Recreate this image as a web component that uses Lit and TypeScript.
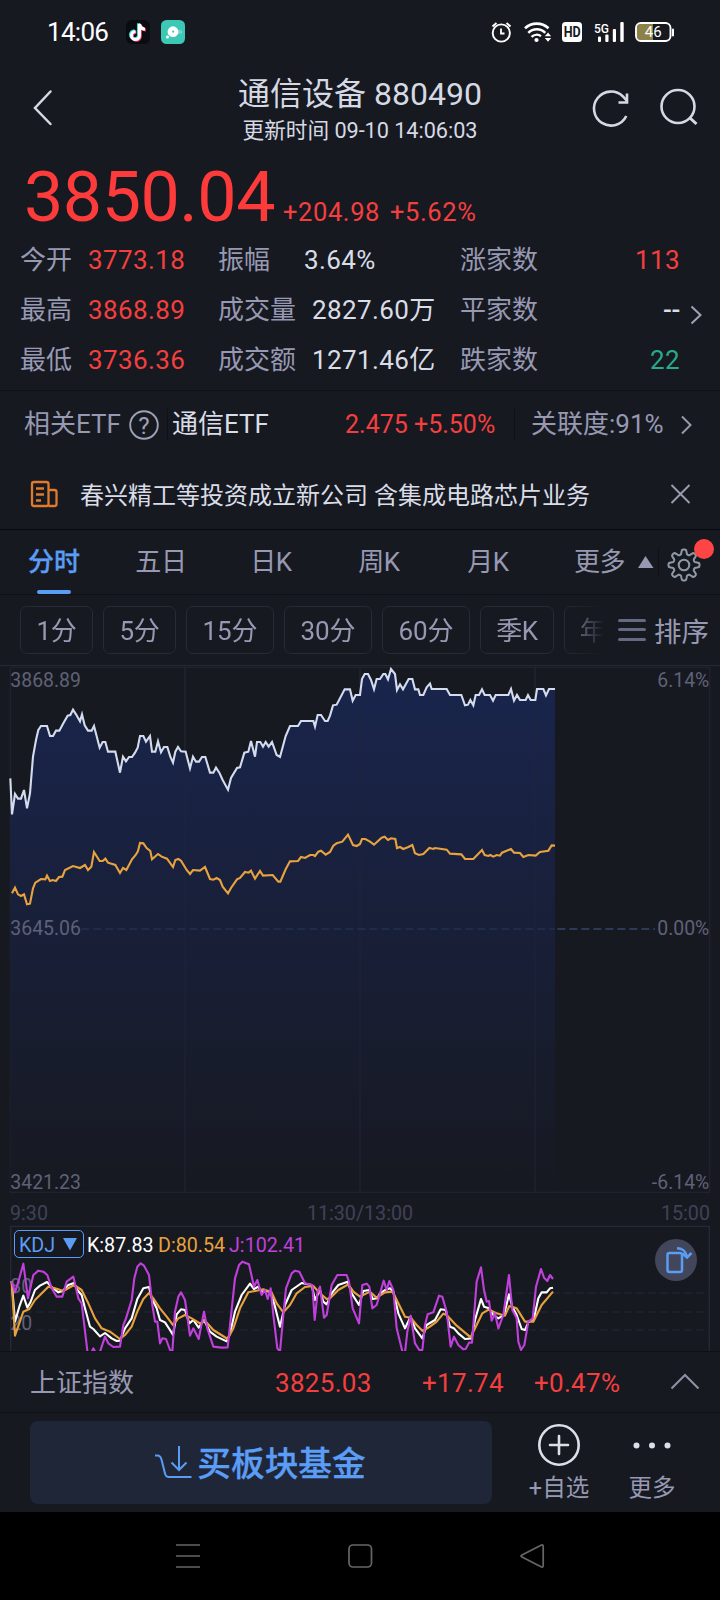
import { LitElement, html, css } from "lit";
import { customElement } from "lit/decorators.js";

// Chart series. Units are thirds of a pixel, as "x,y" pairs.
const PRICE =
  "31,355 36,463 45,402 54,416 63,416 72,390 81,445 90,400 99,290 108,240 115,210 123,198 141,198 150,228 159,228 168,212 178,212 190,190 203,167 211,165 219,149 228,163 240,184 246,163 254,196 264,212 275,212 282,198 299,263 308,246 316,246 324,275 346,275 360,338 369,290 378,304 387,291 396,291 405,278 413,263 420,228 430,228 438,245 450,228 456,275 466,275 474,244 483,277 492,261 502,261 511,290 519,308 526,275 534,261 543,274 557,275 570,325 579,290 588,305 597,305 606,291 616,291 630,338 640,338 648,323 658,338 668,360 684,389 693,354 711,324 720,322 733,278 745,275 753,243 765,290 771,246 781,246 789,260 797,246 806,260 816,246 830,285 840,291 857,228 870,198 894,198 903,183 940,183 945,200 953,165 963,165 975,183 983,183 990,167 999,136 1010,134 1034,88 1050,88 1058,122 1067,105 1080,105 1086,57 1094,42 1104,42 1113,60 1122,88 1130,57 1140,57 1150,42 1156,42 1164,58 1173,27 1185,42 1191,90 1200,73 1209,88 1226,57 1237,57 1245,88 1255,88 1260,105 1270,105 1280,82 1290,71 1295,87 1340,87 1350,105 1384,105 1395,136 1404,134 1411,120 1420,136 1427,105 1437,105 1446,88 1454,105 1470,105 1479,122 1487,105 1525,105 1533,87 1542,122 1551,105 1560,120 1577,120 1584,105 1592,120 1606,120 1611,87 1630,87 1638,106 1647,87 1665,87";
const AVERAGE =
  "36,700 45,683 54,703 63,708 72,703 81,733 90,731 99,685 106,668 123,657 136,658 141,647 150,663 158,660 168,663 177,651 187,650 195,630 219,618 240,624 255,615 264,630 274,620 282,576 299,603 308,603 316,596 324,608 346,615 360,639 369,624 379,630 396,598 407,585 414,573 420,549 430,550 440,564 451,573 456,598 474,582 485,590 501,596 519,621 526,600 535,597 543,602 560,630 570,642 579,630 600,632 615,621 630,657 640,659 650,654 660,660 668,680 684,700 693,684 711,658 720,654 735,636 746,638 753,632 765,656 780,633 789,647 818,645 835,665 841,665 857,628 870,604 894,603 903,591 915,594 930,585 940,585 945,588 955,575 963,572 977,584 990,576 1000,557 1010,550 1027,545 1044,524 1059,555 1070,558 1080,552 1086,537 1096,537 1110,545 1122,554 1145,533 1154,530 1164,540 1173,535 1186,537 1191,564 1200,561 1210,567 1225,561 1237,555 1245,580 1257,585 1270,582 1288,564 1300,567 1305,564 1340,569 1350,581 1384,583 1395,597 1420,597 1446,570 1454,585 1465,588 1471,585 1480,590 1490,585 1500,587 1506,578 1533,567 1542,578 1560,579 1570,591 1585,585 1607,587 1620,576 1645,572 1655,556 1665,557";
const LINE_K =
  "35,318 45,440 58,395 70,362 82,398 92,380 105,345 120,332 141,321 155,336 175,352 188,348 205,330 222,324 232,345 245,360 255,400 270,455 280,462 300,484 315,474 335,490 350,498 360,497 375,460 395,430 412,372 430,340 447,336 455,370 470,400 480,435 495,442 510,465 519,480 530,418 543,403 555,405 568,445 580,435 596,458 612,435 630,470 650,485 680,499 690,475 705,410 725,360 750,326 762,342 775,335 785,350 800,348 812,352 825,395 840,455 855,390 875,345 905,324 935,330 945,375 960,345 970,380 980,388 995,355 1015,330 1043,320 1055,355 1077,390 1090,348 1108,345 1118,372 1132,370 1140,355 1155,345 1170,340 1180,350 1195,415 1215,460 1232,425 1245,460 1267,490 1280,450 1305,435 1322,403 1337,405 1350,455 1362,460 1375,475 1395,492 1415,490 1425,435 1443,372 1452,395 1467,400 1480,420 1495,430 1512,420 1527,358 1537,395 1550,420 1565,462 1575,465 1585,442 1602,430 1615,370 1625,352 1640,352 1650,340 1659,338";
const LINE_D =
  "35,318 45,482 70,410 88,402 105,375 145,335 165,340 190,348 222,330 245,345 265,385 285,430 305,460 330,470 360,492 375,480 395,455 412,410 430,372 447,354 460,370 480,400 500,425 519,450 535,430 555,420 575,430 600,445 615,437 640,465 683,492 700,460 720,400 745,352 790,343 815,352 830,385 850,412 870,390 890,355 915,336 940,333 955,350 980,372 990,370 1015,345 1045,328 1060,350 1080,365 1110,350 1130,368 1155,352 1178,350 1195,385 1215,425 1232,428 1250,450 1268,468 1290,455 1310,440 1330,416 1340,420 1370,452 1412,487 1430,450 1447,415 1467,403 1490,415 1515,422 1528,393 1550,400 1575,440 1600,440 1625,390 1659,350";
const LINE_J =
  "35,318 45,352 58,310 70,266 84,370 100,300 115,287 130,290 142,300 155,340 170,365 187,365 200,320 220,305 235,370 245,385 263,535 273,535 280,520 288,535 300,530 315,485 325,505 340,516 360,515 370,450 378,430 395,375 403,310 412,275 422,265 432,272 447,300 457,390 465,440 472,440 480,505 487,490 498,492 510,525 517,530 525,410 535,365 543,352 555,375 570,482 580,460 596,492 612,410 622,460 640,515 665,518 683,517 690,450 705,310 717,270 727,260 747,268 762,335 772,315 785,360 795,345 803,372 812,340 820,420 832,520 840,530 850,420 858,340 875,295 885,287 898,290 915,325 937,330 944,435 953,350 960,335 972,428 980,420 995,330 1012,300 1040,300 1047,320 1058,400 1077,445 1087,330 1100,326 1108,335 1117,400 1130,390 1151,317 1160,345 1168,318 1180,345 1190,460 1208,533 1215,533 1222,470 1232,422 1245,505 1258,525 1267,525 1275,450 1283,418 1300,412 1317,362 1327,365 1340,410 1352,515 1362,485 1375,510 1390,523 1397,522 1407,503 1416,503 1430,320 1443,277 1452,345 1460,380 1467,378 1475,437 1485,415 1495,460 1510,420 1527,300 1537,405 1550,430 1555,500 1563,525 1573,510 1585,440 1598,430 1608,335 1623,282 1632,308 1642,318 1650,300 1659,312";

const base = css`
  :host { display: block; }
  * { box-sizing: border-box; }
  svg { display: block; flex: none; overflow: visible; }
  .row { display: flex; align-items: center; }
  .red { color: #f43f3e; }
  .green { color: #2aa88b; }
  .light { color: #dadde7; }
  span { white-space: nowrap; }
`;

@customElement("status-bar")
class StatusBar extends LitElement {
  static styles = [base, css`
    .bar { height: 63px; padding-left: 47px; color: #fff; }
    .time { width: 79px; font-size: 26px; letter-spacing: -0.7px; padding-top: 2px; }
    .apps { margin-right: 305px; }
    .hd { font: 700 14.500px Roboto, sans-serif; }
    .net { font: 500 12.500px Roboto, sans-serif; }
    .charge { font: 400 15px Roboto, sans-serif; }
  `];
  render() {
    return html`<div class="bar row">
      <span class="time">14:06</span>
      <svg class="apps" width="59" height="24" viewBox="126 20 59 24">
        <rect x="126" y="20" width="24" height="24" rx="6" fill="#0b0b12" />
        <g fill="none" stroke-width="3">
          <path transform="translate(-1,-.8)" stroke="#35dfe0" d="M139.5 24v11.5a4 4 0 1 1-4-4M139.5 24c.4 3 2.500 5 5.500 5.200" />
          <path transform="translate(.9,.8)" stroke="#f0355a" d="M139.5 24v11.5a4 4 0 1 1-4-4M139.5 24c.4 3 2.500 5 5.500 5.200" />
          <path stroke="#fff" d="M139.5 24v11.5a4 4 0 1 1-4-4M139.5 24c.4 3 2.500 5 5.500 5.200" />
        </g>
        <rect x="161" y="20" width="24" height="24" rx="5.500" fill="#3cc8b4" />
        <circle cx="173" cy="31.700" r="5.400" fill="#fff" />
        <path d="M171.600 30.800h3l-1.500 2.400z" fill="#3cc8b4" />
        <circle cx="167.500" cy="37" r="1.500" fill="#fff" />
        <path d="M179 30v4M181 30.500v3" stroke="#a5e8dd" />
      </svg>
      <svg width="186" height="24" viewBox="490 20 186 24" fill="none" stroke="#fff">
        <circle cx="501.300" cy="33" r="8.600" stroke-width="1.900" />
        <path d="M501 28.500v5h3.500" stroke-width="1.800" />
        <path d="M492.500 26.500l4-3.500M506.500 23l4 3.500" stroke-width="2" />
        <g stroke-width="2.600">
          <path d="M525 28.300a17 17 0 0 1 23.500 0" />
          <path d="M528.300 32.800a12 12 0 0 1 17 0" />
          <path d="M531.500 36.800a7.600 7.600 0 0 1 9.500-.7" stroke-width="2.300" />
        </g>
        <circle cx="536.500" cy="40" r="2.100" fill="#fff" stroke="none" />
        <path d="M544.800 36.200l3.200-3.700 3.200 3.700zM544.800 38l3.200 3.700 3.200-3.700z" fill="#fff" stroke="none" />
        <g stroke="none" fill="#fff">
          <rect x="562" y="22" width="20" height="20" rx="3.500" />
          <text class="hd" x="563.700" y="37.300" fill="#171921" textLength="17" lengthAdjust="spacingAndGlyphs">HD</text>
          <text class="net" x="594" y="33" textLength="15" lengthAdjust="spacingAndGlyphs">5G</text>
          <rect x="598" y="36.500" width="3" height="5.500" rx="1" />
          <rect x="605.300" y="34.500" width="3.200" height="7.500" rx="1" />
          <rect x="612.800" y="29" width="3.200" height="13" rx="1" />
          <rect x="620.300" y="22" width="3.400" height="20" rx="1" />
          <path d="M641 24h12v16h-12a4 4 0 0 1-4-4v-8a4 4 0 0 1 4-4z" fill="#8e8148" />
          <rect x="672" y="28.500" width="2" height="8" rx="1" />
        </g>
        <rect x="636" y="23" width="34.500" height="18" rx="5" stroke-width="1.900" />
        <text class="charge" x="653.300" y="37.400" text-anchor="middle" fill="#fff" stroke="none">46</text>
      </svg>
    </div>`;
  }
}

@customElement("page-header")
class PageHeader extends LitElement {
  static styles = [base, css`
    .head { height: 93px; display: grid; grid-template-columns: 180px 1fr 180px; align-items: center; color: #d6d9e4; }
    .titles { text-align: center; }
    .name { font-size: 32px; line-height: 40px; }
    .time { font-size: 21.700px; line-height: 30px; margin-top: 2px; letter-spacing: -0.05px; }
  `];
  render() {
    return html`<div class="head">
      <svg width="180" height="50" viewBox="0.500 85 180 50" fill="none" stroke="#d6d9e4" stroke-width="2.500">
        <path d="M51 91.500L35.500 108 51 124" stroke-linecap="round" />
      </svg>
      <div class="titles">
        <div class="name">通信设备 880490</div>
        <div class="time">更新时间 09-10 14:06:03</div>
      </div>
      <svg width="180" height="50" viewBox="540 84.500 180 50" fill="none" stroke="#d6d9e4" stroke-width="2.600">
        <path d="M626.300 115.500A17 17 0 1 1 623 96l4 4.500" />
        <path d="M627 93v9h-8.500" />
        <circle cx="678" cy="106" r="16.500" />
        <path d="M690 117.500l6.500 6" stroke-width="3" />
      </svg>
    </div>`;
  }
}

@customElement("quote-panel")
class QuotePanel extends LitElement {
  static styles = [base, css`
    .main { height: 79px; padding: 2px 0 0 24px; align-items: baseline; }
    .price { font-size: 70px; line-height: 78px; color: #fd3b3b; width: 259px; letter-spacing: -0.5px; }
    .chg { font-size: 25.500px; letter-spacing: 0.6px; width: 107px; }
    .stats { height: 156px; padding-top: 1px; border-bottom: 1px solid #0f1117; position: relative; }
    .line { height: 50px; display: grid; grid-template-columns: 68px 130px 242px 220px; padding-left: 20px; font-size: 26px; color: #9799b3; align-items: center; }
    .num { font-size: 26px; letter-spacing: 0.4px; }
    .cell { display: flex; }
    .k { width: 94px; }
    .k.short { width: 86px; }
    .last { justify-content: space-between; }
    .more { position: absolute; left: 688px; top: 69px; }
    .dash { font-weight: 500; letter-spacing: -0.3px; }
  `];
  render() {
    const rows = [
      ["今开", "3773.18", "振幅", "3.64%", "涨家数", "113", "red"],
      ["最高", "3868.89", "成交量", "2827.60万", "平家数", "--", "light dash"],
      ["最低", "3736.36", "成交额", "1271.46亿", "跌家数", "22", "green"],
    ];
    return html`
      <div class="main row red">
        <span class="price">3850.04</span><span class="chg">+204.98</span><span class="chg">+5.62%</span>
      </div>
      <div class="stats">
        ${rows.map((r) => html`<div class="line">
          <span>${r[0]}</span><span class="num red">${r[1]}</span>
          <div class="cell"><span class="k ${r[2].length < 3 ? "short" : ""}">${r[2]}</span><span class="num light">${r[3]}</span></div>
          <div class="cell last"><span>${r[4]}</span><span class="num ${r[6]}">${r[5]}</span></div>
        </div>`)}
        <svg class="more" width="16" height="22" viewBox="688 304 16 22" fill="none" stroke="#a0a3b5" stroke-width="2">
          <path d="M691.500 306.500L700.500 315l-9 8.500" />
        </svg>
      </div>`;
  }
}

@customElement("related-rows")
class RelatedRows extends LitElement {
  static styles = [base, css`
    .etf { height: 68px; padding-left: 24px; font-size: 26px; color: #9799b3; }
    .lbl { width: 105px; }
    .sep { width: 1px; height: 32px; background: #0f1117; }
    .etfname { margin-left: 4px; width: 173px; }
    .val { width: 169px; font-size: 25px; }
    .rel { margin-left: 16px; width: 149px; }
    .mark { font: 400 24px Roboto, sans-serif; }
    .news { height: 71px; padding-left: 30px; border-bottom: 1px solid #08090e; font-size: 24px; }
    .text { margin-left: 22px; width: 590px; padding-top: 4px; }
  `];
  render() {
    return html`
      <div class="etf row">
        <span class="lbl">相关ETF</span>
        <svg width="38" height="32" viewBox="129 409 38 32" fill="none" stroke="#9fa2b6" stroke-width="1.900">
          <circle cx="144" cy="425" r="13.800" />
          <text class="mark" x="144" y="433.500" text-anchor="middle" fill="#9fa2b6" stroke="none">?</text>
        </svg>
        <div class="sep"></div>
        <span class="etfname light">通信ETF</span>
        <span class="val red">2.475 +5.50%</span>
        <div class="sep"></div>
        <span class="rel">关联度:91%</span>
        <svg width="12" height="20" viewBox="680 415 12 20" fill="none" stroke="#9799a8" stroke-width="2"><path d="M682 416.500l8.500 8.500-8.500 8.500" /></svg>
      </div>
      <div class="news row">
        <svg width="28" height="28" viewBox="30 480 28 28" fill="none" stroke="#e07a2c" stroke-width="2.300">
          <rect x="32" y="482" width="16.500" height="24" rx="2" />
          <path d="M48.500 490h6a2 2 0 0 1 2 2v12a2 2 0 0 1-2 2h-6M36 488.500h8M36 494.500h8M36 500.500h5" />
        </svg>
        <span class="text light">春兴精工等投资成立新公司 含集成电路芯片业务</span>
        <svg width="20" height="20" viewBox="670 484.500 20 20" fill="none" stroke="#9a9caf" stroke-width="1.900"><path d="M671.500 485.500l18 18M689.500 485.500l-18 18" /></svg>
      </div>`;
  }
}

@customElement("period-tabs")
class PeriodTabs extends LitElement {
  static styles = [base, css`
    .tabs { height: 65px; border-bottom: 1px solid #0f1117; font-size: 26px; color: #9799b3; display: grid; grid-template-columns: 108px 106px 114px 102px 116px auto auto; }
    .tab { display: flex; flex-direction: column; align-items: center; justify-content: space-between; line-height: 60px; height: 64px; letter-spacing: -0.3px; }
    .tab span { height: 60px; padding-top: 2px; }
    .tab.on { color: #5b9cf4; font-weight: 500; -webkit-text-stroke: 0.3px #5b9cf4; letter-spacing: 0; }
    .mark { width: 34px; height: 4px; border-radius: 2px; background: #5b9cf4; }
    .more { margin-left: 28px; width: 63px; line-height: 60px; padding-top: 2px; letter-spacing: -0.500px; }
    .chips { height: 71px; padding: 0 10px 0 20px; border-bottom: 1px solid #262934; color: #9799b3; font-size: 26px; }
    .scroll { display: flex; gap: 10px; width: 584px; overflow: hidden; -webkit-mask-image: linear-gradient(90deg, #000 93%, transparent 100%); mask-image: linear-gradient(90deg, #000 93%, transparent 100%); }
    .chip { flex: none; height: 48px; line-height: 46px; padding-top: 1px; border: 1px solid #272a37; border-radius: 7px; text-align: center; width: 73px; letter-spacing: -0.3px; }
    .wide { width: 88px; letter-spacing: 0; }
    .quarter { width: 74px; }
    .sort { margin-left: 8px; padding-top: 5px; font-size: 27.500px; }
    .burger { margin-left: 14px; }
  `];
  render() {
    const teeth = Array.from({ length: 96 }, (_, i) => {
      const a = (i / 96) * Math.PI * 2;
      const r = 13.2 + 2.4 * Math.tanh(2.2 * Math.cos(8 * a));
      return `${(684 + r * Math.sin(a)).toFixed(2)},${(565 - r * Math.cos(a)).toFixed(2)}`;
    }).join(" ");
    return html`
      <div class="tabs">
        ${["分时", "五日", "日K", "周K", "月K"].map((t, i) => html`<div class="tab ${i === 0 ? "on" : ""}"><span>${t}</span>${i === 0 ? html`<div class="mark"></div>` : ""}</div>`)}
        <span class="more">更多</span>
        <svg width="83" height="64" viewBox="637 530 83 64">
          <path d="M645.500 556l8 12h-15.500z" fill="#9799b3" />
          <path d="M658.500 548v28" stroke="#0f1117" />
          <polygon points=${teeth} fill="none" stroke="#8f99a5" stroke-width="2" stroke-linejoin="round" />
          <circle cx="684" cy="565" r="5.300" fill="none" stroke="#8f99a5" stroke-width="2" />
          <circle cx="704" cy="549" r="10" fill="#fd4545" />
        </svg>
      </div>
      <div class="chips row">
        <div class="scroll">
          ${["1分", "5分", "15分", "30分", "60分", "季K", "年K"].map((t) => html`<div class="chip ${t.length > 2 ? "wide" : t === "季K" ? "quarter" : ""}">${t}</div>`)}
        </div>
        <svg class="burger" width="28" height="24" viewBox="618 618 28 24" stroke="#666982" stroke-width="3" stroke-linecap="round"><path d="M619.500 620.500h25M619.500 629.500h25M619.500 639.500h25" /></svg>
        <span class="sort">排序</span>
      </div>`;
  }
}

@customElement("price-charts")
class PriceCharts extends LitElement {
  static styles = [base, css`
    text { font: 400 58.300px Roboto, sans-serif; }
    .axis { fill: #5f6177; }
    .times { height: 32px; padding: 10px 10px 0 10px; display: grid; grid-template-columns: 1fr auto 1fr; align-items: center; font-size: 19.700px; line-height: 22px; color: #404256; }
    .end { text-align: right; }
    .sub { height: 126px; overflow: hidden; display: grid; }
    .sub > * { grid-area: 1 / 1; }
    .legend { display: flex; align-items: center; height: 28px; margin: 5px 0 0 14px; font-size: 19.700px; z-index: 1; }
    .legend span { padding-top: 3px; }
    .pick { display: flex; align-items: center; justify-content: space-between; width: 70px; height: 28px; padding: 0 6px 0 4px; border: 1px solid #5b9cf4; border-radius: 5px; color: #5b9cf4; }
    .k { color: #fff; margin-left: 3px; width: 71px; }
    .d { color: #e8a23c; width: 71px; }
    .j { color: #c040dc; }
    .turn { justify-self: end; margin: 14px 23px 0 0; z-index: 1; }
  `];
  render() {
    return html`
      <svg width="720" height="527" viewBox="0 18 2160 1581">
        <defs><linearGradient id="fill" x1="0" y1="0" x2="0" y2="1">
          <stop offset="0" stop-color="#19254d" /><stop offset=".5" stop-color="#181f38" /><stop offset="1" stop-color="#171921" />
        </linearGradient></defs>
        <path d="M31 22H2129V1597H31z" fill="none" stroke="#20232d" stroke-width="4" />
        <path d="M555 22V1597M1080 22V1597M1605 22V1597" stroke="#20232d" stroke-width="5" />
        <polygon points="31,1592 ${PRICE} 1665,1592" fill="url(#fill)" />
        <path d="M555 280V1592M1080 110V1592M1605 125V1592" stroke="#23263a" stroke-width="5" opacity=".5" />
        <path d="M244 807H1665" stroke="#202b48" stroke-width="6" stroke-dasharray="24 12" />
        <path d="M1672 807H1965" stroke="#2b3a59" stroke-width="6" stroke-dasharray="24 12" />
        <polyline points=${PRICE} fill="none" stroke="#d3dcef" stroke-width="6.300" />
        <polyline points=${AVERAGE} fill="none" stroke="#e8a33f" stroke-width="6.300" />
        <g class="axis">
          <text x="31" y="81">3868.89</text><text x="31" y="825">3645.06</text><text x="31" y="1587">3421.23</text>
          <g text-anchor="end"><text x="2128" y="81">6.14%</text><text x="2128" y="825">0.00%</text><text x="2128" y="1587">-6.14%</text></g>
        </g>
      </svg>
      <div class="times"><span>9:30</span><span>11:30/13:00</span><span class="end">15:00</span></div>
      <div class="sub">
        <svg width="720" height="126" viewBox="0 150 2160 378">
          <path d="M32 528V154H2128V528" fill="none" stroke="#262935" stroke-width="4" />
          <path d="M36 354H2128M36 411H2128M36 465H2128" stroke="#20232e" stroke-width="5" stroke-dasharray="24 12" />
          <g class="axis"><text x="31" y="354">80</text><text x="31" y="465">20</text></g>
          <g fill="none" stroke-width="6.300" stroke-linejoin="round">
            <polyline points=${LINE_K} stroke="#fff" /><polyline points=${LINE_D} stroke="#e8a23c" /><polyline points=${LINE_J} stroke="#c040dc" />
          </g>
        </svg>
        <div class="legend">
          <div class="pick"><span>KDJ</span><svg width="14" height="13" viewBox="0 0 14 13"><path d="M0 0h14L7 12.500z" fill="#5b9cf4" /></svg></div>
          <span class="k">K:87.83</span><span class="d">D:80.54</span><span class="j">J:102.41</span>
        </div>
        <svg class="turn" width="42" height="42" viewBox="0 0 42 42" fill="none" stroke="#5b9cf4" stroke-width="2.500">
          <circle cx="21" cy="21" r="21" fill="#42465a" stroke="none" />
          <rect x="12.500" y="14" width="14.500" height="19" rx="2" />
          <path d="M22 9.200c5 0 9 3 10 8.300M27.500 14.500l4.500 4 4.500-4.500" />
        </svg>
      </div>`;
  }
}

@customElement("bottom-bar")
class BottomBar extends LitElement {
  static styles = [base, css`
    .index { height: 62px; border-top: 1px solid #0f1117; border-bottom: 1px solid #0f1117; padding-left: 30px; font-size: 26px; color: #9799b3; background: #171921; }
    .index span { padding-top: 4px; }
    .n { letter-spacing: 0.300px; }
    .i0 { width: 245px; } .i1 { width: 147px; } .i2 { width: 112px; } .i3 { width: 136px; }
    .actions { height: 99px; padding-left: 30px; background: #171921; }
    .buy { width: 462px; height: 83px; margin-bottom: 1px; border-radius: 8px; background: #1e2638; display: flex; align-items: center; justify-content: center; gap: 4px; padding-right: 1px; color: #5b9cf4; font-size: 33.700px; font-weight: 500; }
    .buy span { padding-top: 7px; -webkit-text-stroke: 0.3px #5b9cf4; }
    .act { display: flex; flex-direction: column; align-items: center; color: #9799b3; font-size: 23.500px; line-height: 30px; }
    .act span { height: 30px; padding-top: 1px; }
    .add { margin-left: 16px; width: 102px; }
    .dots { width: 84px; }
    .act svg { margin-bottom: 6px; }
    .nav { height: 88px; background: #000; }
  `];
  render() {
    return html`
      <div class="index row">
        <span class="i0">上证指数</span><span class="n red i1">3825.03</span><span class="n red i2">+17.74</span><span class="n red i3">+0.47%</span>
        <svg width="30" height="18" viewBox="670 1373 30 18" fill="none" stroke="#8f92a3" stroke-width="2"><path d="M671.500 1388.500L685 1375l13.500 13.500" /></svg>
      </div>
      <div class="actions row">
        <div class="buy">
          <svg width="38" height="34" viewBox="155 1445 38 34" fill="none" stroke="#5b9cf4" stroke-width="2">
            <path d="M155 1455.500h2.500c2.500 0 3.200 1 4 4l3.500 14c.8 3 1.500 3.500 4 3.500h22.500M179 1446v23M171.500 1462.500l7.500 7.500 7.500-7.500" />
          </svg>
          <span>买板块基金</span>
        </div>
        <div class="act add">
          <svg width="42" height="42" viewBox="0 0 42 42" fill="none" stroke="#dcdee8" stroke-width="2.600"><circle cx="21" cy="21" r="19.700" /><path d="M21 12v18M12 21h18" stroke-linecap="round" /></svg>
          <span>+自选</span>
        </div>
        <div class="act dots">
          <svg width="42" height="42" viewBox="0 0 42 42" fill="#dcdee8"><circle cx="5.500" cy="21.500" r="3" /><circle cx="21" cy="21.500" r="3" /><circle cx="36.500" cy="21.500" r="3" /></svg>
          <span>更多</span>
        </div>
      </div>
      <div class="nav">
        <svg width="720" height="88" viewBox="0 1512 720 88" fill="none" stroke="#666" stroke-width="1.700">
          <path d="M176 1545h24M176 1556h24M176 1567h24" />
          <rect x="349" y="1545" width="22.500" height="22" rx="4" />
          <path d="M541 1545.200l-19 9.800q-2 1 0 2l19 9.800q2.200 1 2.200-1.300v-19q0-2.300-2.200-1.300z" />
        </svg>
      </div>`;
  }
}

@customElement("app-root")
class AppRoot extends LitElement {
  static styles = css`
    :host { display: flex; flex-direction: column; width: 720px; height: 1600px; overflow: hidden; background: #171921; font-family: Roboto, "Noto Sans CJK SC", sans-serif; line-height: 1.2; }
  `;
  render() {
    return html`
      <status-bar></status-bar>
      <page-header></page-header>
      <quote-panel></quote-panel>
      <related-rows></related-rows>
      <period-tabs></period-tabs>
      <price-charts></price-charts>
      <bottom-bar></bottom-bar>`;
  }
}
